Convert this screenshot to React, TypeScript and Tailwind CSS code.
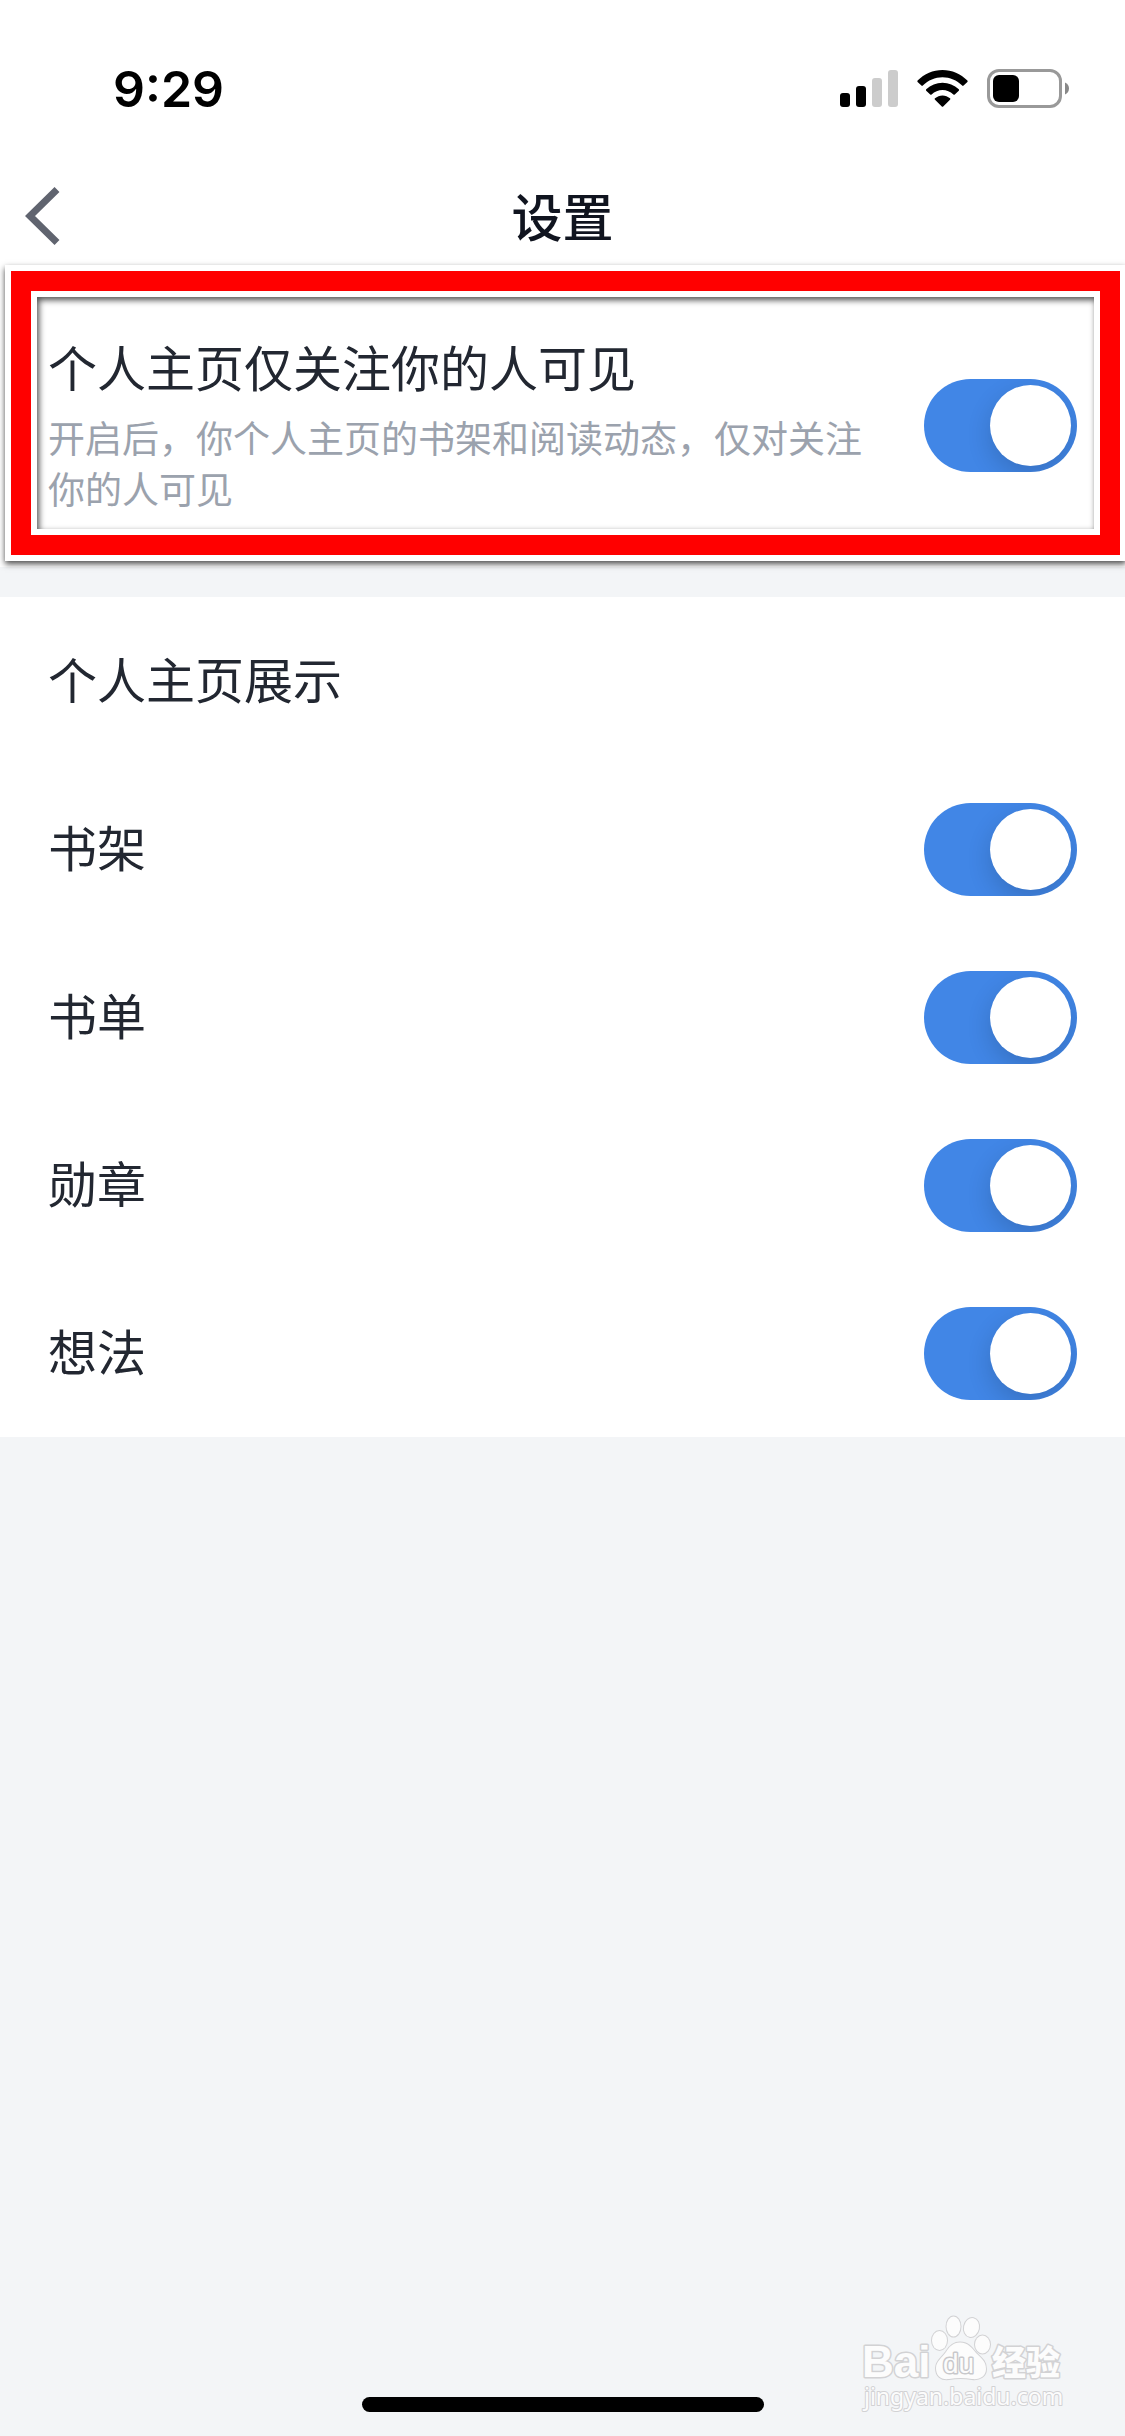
import { useState } from "react";

const displayItems = [
  { id: "shelf", label: "书架" },
  { id: "booklist", label: "书单" },
  { id: "medal", label: "勋章" },
  { id: "thought", label: "想法" },
];

type SwitchProps = {
  id: string;
  checked: boolean;
  onChange: () => void;
};

const Switch = ({ id, checked, onChange }: SwitchProps) => (
  <input
    id={id}
    type="checkbox"
    role="switch"
    checked={checked}
    onChange={onChange}
    className="h-[93px] w-[153px] shrink-0 cursor-pointer appearance-none overflow-hidden rounded-full bg-gray-300 p-[6px] transition-colors before:block before:size-[81px] before:rounded-full before:bg-white before:shadow-[0_9px_24px_rgba(0,0,0,0.16)] before:transition-transform checked:bg-[#4186e6] checked:before:translate-x-[60px]"
  />
);

const StatusBar = () => (
  <div className="flex h-[147px] items-center justify-between pt-[30px] pr-[56px] pl-[113px]">
    <span className="font-['Inter',sans-serif] text-[50px] leading-none font-semibold text-black">9:29</span>
    <div className="flex items-center gap-[19px]">
      {/* Signal */}
      <svg width="58" height="37" viewBox="0 0 58 37" aria-hidden="true">
        <rect x="0" y="23" width="10" height="14" rx="3" />
        <rect x="16" y="16" width="10" height="21" rx="3" />
        <rect x="32" y="8" width="10" height="29" rx="3" fill="#ccc" />
        <rect x="48" y="0" width="10" height="37" rx="3" fill="#ccc" />
      </svg>
      {/* Wifi */}
      <svg width="51" height="37" viewBox="0 0 51 37" aria-hidden="true">
        <path d="M0.6 10.6C7.4 3.8 16 0 25.5 0S43.6 3.8 50.4 10.6Q51 11.3 50.4 12L46.6 15.6Q45.9 16.2 45.2 15.6C39.7 10.2 33 7.3 25.5 7.3S11.3 10.2 5.8 15.6Q5.1 16.2 4.4 15.6L0.6 12Q0 11.3 0.6 10.6Z" />
        <path d="M9.2 19.3C13.8 15 19.3 12.7 25.5 12.7S37.2 15 41.8 19.3Q42.4 20 41.8 20.7L37.8 24.5Q37.1 25.1 36.4 24.5C33.3 21.6 29.6 20 25.5 20S17.7 21.6 14.6 24.5Q13.9 25.1 13.2 24.5L9.2 20.7Q8.6 20 9.2 19.3Z" />
        <path d="M18 28.3C20.2 26.4 22.7 25.4 25.5 25.4S30.8 26.4 33 28.3Q33.7 29 33 29.7L26.2 36.4Q25.5 37.1 24.8 36.4L18 29.7Q17.3 29 18 28.3Z" />
      </svg>
      {/* Battery */}
      <svg width="82" height="39" viewBox="0 0 82 39" aria-hidden="true">
        <rect x="1.5" y="1.5" width="72" height="36" rx="10.5" fill="none" stroke="#999" strokeWidth="3" />
        <rect x="6" y="6" width="26" height="27" rx="6" />
        <path d="M78 13.5C80.4 14.5 82 16.8 82 19.5S80.4 24.5 78 25.5Z" fill="#888" />
      </svg>
    </div>
  </div>
);

const Watermark = () => (
  <svg
    className="absolute right-[55px] bottom-[19px]"
    width="210"
    height="105"
    viewBox="20 22 210 105"
    fill="#fcfcfc"
    stroke="#d2d2d4"
    strokeWidth="2"
    strokeLinejoin="round"
    paintOrder="stroke"
    aria-hidden="true"
  >
    <text x="22" y="87" fontFamily="'Liberation Sans', sans-serif" fontSize="44" fontWeight="700" strokeWidth="3">Bai</text>
    <ellipse cx="99.5" cy="50.5" rx="7.5" ry="9.5" />
    <ellipse cx="113.5" cy="36.5" rx="7" ry="10" />
    <ellipse cx="131.5" cy="37.5" rx="7.5" ry="9.5" transform="rotate(12 131.5 37.5)" />
    <ellipse cx="142.5" cy="54.5" rx="7.5" ry="9" />
    <path d="M120 52.5C128 52.5 132 58 136 63C141 68 146 71 146 79C146 86 140 90 132 89C124 87.500 117 87.500 109 89C101 90 96 86 96 78C96 71 102 68 106 62C109 57 113 52.500 120 52.500Z" />
    <text x="103" y="83" fontFamily="'Liberation Sans', sans-serif" fontSize="28" stroke="#c8c8cb" strokeWidth="3">du</text>
    <text x="152" y="85" fontFamily="'Noto Sans CJK SC', sans-serif" fontSize="34" fontWeight="900" strokeWidth="3">经验</text>
    <text x="24" y="115" fontFamily="'Noto Sans', sans-serif" fontSize="23">jingyan.baidu.com</text>
  </svg>
);

const App = () => {
  const [followersOnly, setFollowersOnly] = useState(true);
  const [shown, setShown] = useState<Record<string, boolean>>({
    shelf: true,
    booklist: true,
    medal: true,
    thought: true,
  });

  const toggle = (id: string) => setShown((prev) => ({ ...prev, [id]: !prev[id] }));

  return (
    <div className="relative flex min-h-screen flex-col overflow-hidden bg-[#f3f5f7] font-['Noto_Sans_CJK_SC',sans-serif] text-[#222731]">
      <header className="bg-white">
        <StatusBar />
        <div className="grid h-[137px] grid-cols-[1fr_auto_1fr] items-center px-[24px]">
          <button type="button" aria-label="返回" className="justify-self-start">
            <svg width="38" height="60" viewBox="0 0 38 60" fill="none" stroke="#60646f" strokeWidth="7" aria-hidden="true">
              <path d="M33 3.500L6 30L33 56.500" />
            </svg>
          </button>
          <h1 className="text-[51px] leading-[69px] font-medium text-[#10141f]">设置</h1>
        </div>
      </header>

      <main>
        <section className="relative bg-white px-[48px] py-[51px]">
          <div className="flex items-center justify-between gap-[48px]">
            <label htmlFor="followers-only" className="max-w-[816px] pb-[2px]">
              <span className="block text-[49px] leading-[61px]">个人主页仅关注你的人可见</span>
              <span className="mt-[16px] block text-[37px] leading-[51px] text-[#9ba2ad]">
                开启后，你个人主页的书架和阅读动态，仅对关注你的人可见
              </span>
            </label>
            <Switch
              id="followers-only"
              checked={followersOnly}
              onChange={() => setFollowersOnly(!followersOnly)}
            />
          </div>

          {/* Highlight frame */}
          <div className="pointer-events-none absolute top-[-19px] right-[-1px] bottom-[6px] left-[5px] border-[6px] border-white shadow-[0_3px_6px_rgba(0,0,0,0.7)]">
            <div className="h-full border-[20px] border-[#ff0000]">
              <div className="h-full border-[6px] border-white shadow-[inset_2px_3px_6px_rgba(0,0,0,0.7)]" />
            </div>
          </div>
        </section>

        <section className="mt-[30px] bg-white px-[48px]">
          <h2 className="flex h-[168px] items-center pb-[8px] text-[49px] leading-[61px] font-normal">个人主页展示</h2>
          <ul>
            {displayItems.map((item) => (
              <li key={item.id} className="flex h-[168px] items-center justify-between">
                <label htmlFor={item.id} className="pb-[8px] text-[49px] leading-[61px]">
                  {item.label}
                </label>
                <Switch id={item.id} checked={shown[item.id]} onChange={() => toggle(item.id)} />
              </li>
            ))}
          </ul>
        </section>
      </main>

      {/* Home indicator */}
      <footer className="mt-auto flex justify-center pb-[24px]">
        <div className="h-[15px] w-[402px] rounded-full bg-black" />
      </footer>
      <Watermark />
    </div>
  );
};

export default App;
